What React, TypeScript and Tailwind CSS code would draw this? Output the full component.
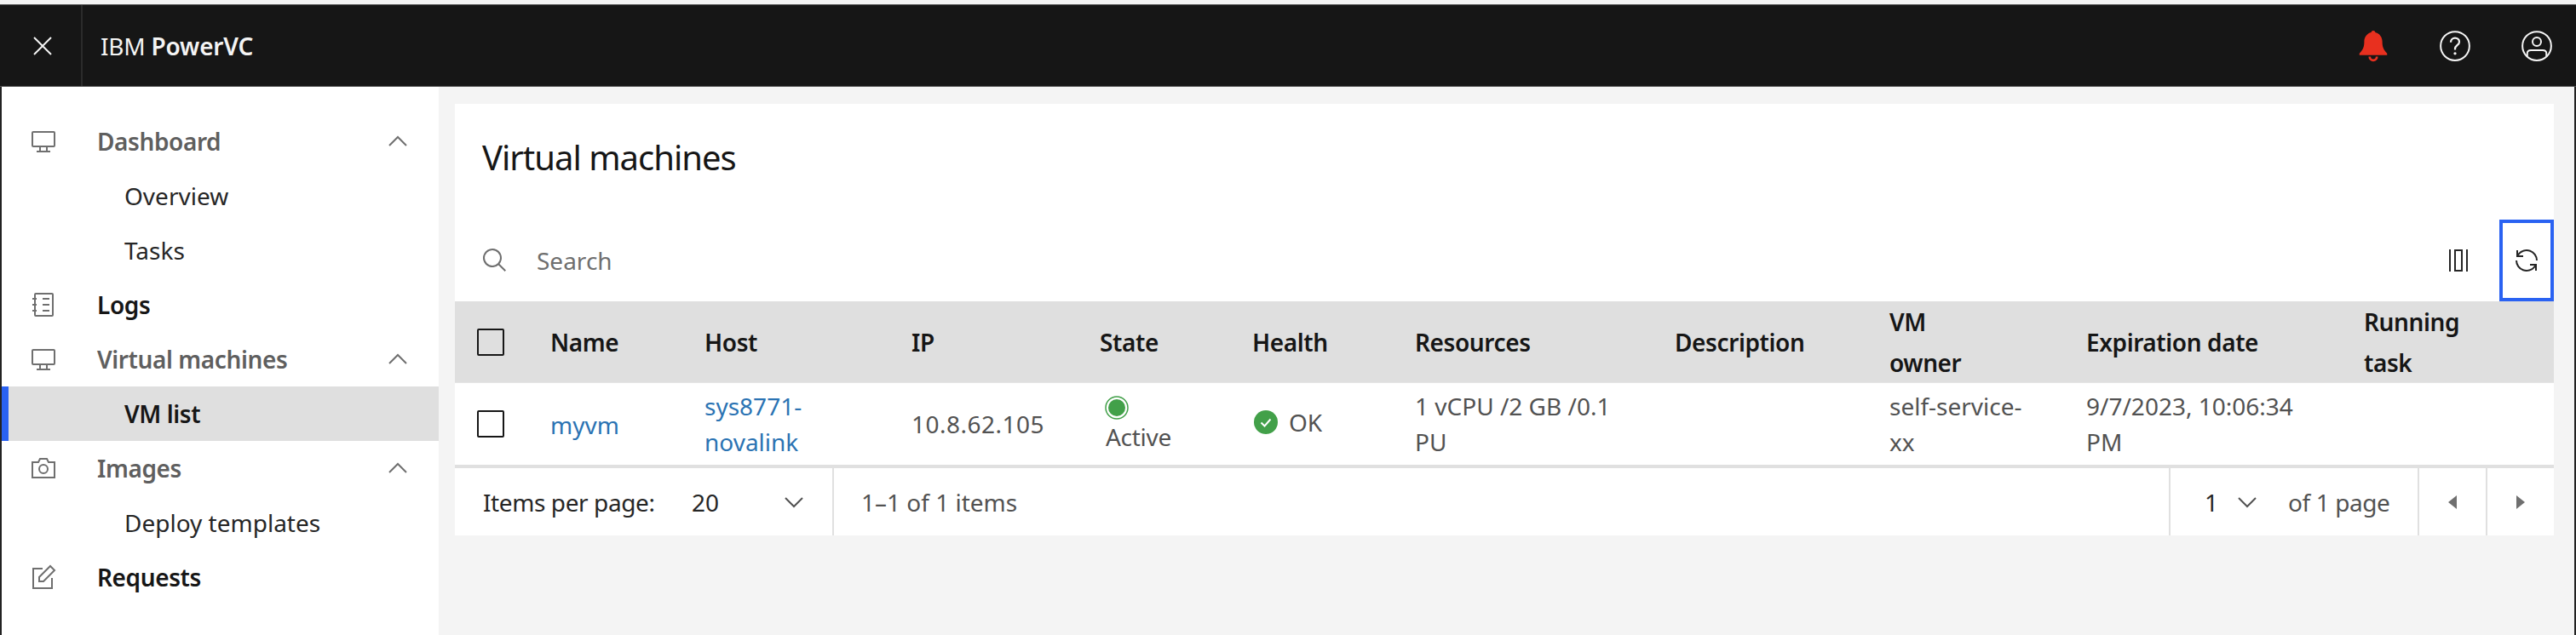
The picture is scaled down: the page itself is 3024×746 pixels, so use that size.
import React from "react";

const svgBase = { viewBox: "0 0 32 32", fill: "none", stroke: "currentColor", strokeWidth: 2 } as const;

function MonitorIcon() {
  return (
    <svg {...svgBase} className="h-8 w-8 text-[#6f6f6f]">
      <rect x="3" y="5" width="26" height="17" rx="1" />
      <path d="M12 22v5M20 22v5M8 28h16" />
    </svg>
  );
}

function LogIcon() {
  return (
    <svg {...svgBase} className="h-8 w-8 text-[#6f6f6f]">
      <rect x="6" y="3" width="21" height="26" rx="1" />
      <path d="M3 9h5M3 16h5M3 23h5M15 9h8M15 16h8M15 23h8" />
    </svg>
  );
}

function CameraIcon() {
  return (
    <svg {...svgBase} className="h-8 w-8 text-[#6f6f6f]">
      <path d="M3 9h7l2-4h8l2 4h7v18H3z" />
      <circle cx="16" cy="17" r="5" />
    </svg>
  );
}

function EditIcon() {
  return (
    <svg {...svgBase} className="h-8 w-8 text-[#6f6f6f]">
      <path d="M15 6H4v23h22V17" />
      <path d="M11 21v-5L24 3l5 5-13 13z" />
    </svg>
  );
}

function ChevronUp() {
  return (
    <svg {...svgBase} className="h-8 w-8 text-[#6f6f6f]">
      <path d="M6 21 16 11l10 10" />
    </svg>
  );
}

function ChevronDown({ className }: { className: string }) {
  return (
    <svg {...svgBase} className={className}>
      <path d="M6 11l10 10 10-10" />
    </svg>
  );
}

function SideItem({ icon, label, tone, chevron }: { icon: React.ReactNode; label: string; tone: string; chevron?: boolean }) {
  return (
    <div className="flex h-16 items-center pl-[33px]">
      <div className="w-[79px]">{icon}</div>
      <span className={`flex-1 font-semibold tracking-[-0.4px] ${tone}`}>{label}</span>
      {chevron && <div className="mr-[32px]"><ChevronUp /></div>}
    </div>
  );
}

function SubItem({ label, active }: { label: string; active?: boolean }) {
  if (active) {
    return <div className="flex h-16 items-center border-l-8 border-[#2a62f2] bg-[#dfdfdf] pl-[136px] font-semibold tracking-[-0.4px] text-[#161616]">{label}</div>;
  }
  return <div className="flex h-16 items-center pl-[144px] text-[#262626]">{label}</div>;
}

function Sidebar() {
  return (
    <aside className="w-[513px] shrink-0 bg-white pt-8">
      <SideItem icon={<MonitorIcon />} label="Dashboard" tone="text-[#5f5f5f]" chevron />
      <SubItem label="Overview" />
      <SubItem label="Tasks" />
      <SideItem icon={<LogIcon />} label="Logs" tone="text-[#161616]" />
      <SideItem icon={<MonitorIcon />} label="Virtual machines" tone="text-[#5f5f5f]" chevron />
      <SubItem label="VM list" active />
      <SideItem icon={<CameraIcon />} label="Images" tone="text-[#5f5f5f]" chevron />
      <SubItem label="Deploy templates" />
      <SideItem icon={<EditIcon />} label="Requests" tone="text-[#161616]" />
    </aside>
  );
}

function TopBar() {
  return (
    <header className="flex h-[97px] shrink-0 items-center border-y border-[#555] bg-[#161616] text-[#f4f4f4]">
      <div className="flex h-full w-[97px] items-center border-r-2 border-[#2b2b2b] pl-[34px]">
        <svg {...svgBase} className="h-8 w-8">
          <path d="M6 6l20 20M26 6 6 26" />
        </svg>
      </div>
      <div className="ml-[21px] flex-1 tracking-[-0.2px]">
        IBM <span className="font-semibold">PowerVC</span>
      </div>
      <svg viewBox="0 0 32 32" className="mr-[56px] h-10 w-10 text-[#e8301f]" fill="currentColor">
        <path d="M16 1.5c1 0 1.8.7 1.9 1.7C22 4.2 24.5 7.8 24.5 12c0 4.5.7 7 4.5 11v1.5H3V23c3.800-4 4.500-6.500 4.500-11 0-4.200 2.500-7.800 6.600-8.800.1-1 .9-1.700 1.900-1.700z" />
        <path d="M11.500 26a4.500 4.500 0 0 0 9 0h-2.200a2.300 2.300 0 0 1-4.600 0z" />
      </svg>
      <svg {...svgBase} className="mr-[56px] h-10 w-10">
        <circle cx="16" cy="16" r="13.500" strokeWidth="1.600" />
        <path d="M12 12.500c0-2.500 1.800-4 4-4s4 1.500 4 3.700c0 3-4 3.300-4 6.300v1" strokeWidth="1.800" />
        <circle cx="16" cy="23" r="1.300" fill="currentColor" stroke="none" />
      </svg>
      <svg {...svgBase} className="mr-[26px] h-10 w-10">
        <circle cx="16" cy="16" r="13.500" strokeWidth="1.600" />
        <circle cx="16" cy="12" r="4" strokeWidth="1.600" />
        <path d="M7 25.500V23c0-2 1.500-3 3.500-3h11c2 0 3.500 1 3.500 3v2.500" strokeWidth="1.600" />
      </svg>
    </header>
  );
}

const gridCols = "grid grid-cols-[112px_181px_243px_221px_179px_191px_305px_252px_231px_326px_1fr]";

function HeaderCell({ children }: { children?: React.ReactNode }) {
  return <div className="flex items-center font-semibold tracking-[-0.4px] text-[#161616]">{children && <span>{children}</span>}</div>;
}

function Checkbox() {
  return (
    <div className="flex items-center pl-[26px]">
      <div className="h-8 w-8 rounded-[2px] border-2 border-[#161616]" />
    </div>
  );
}

function VmTable() {
  return (
    <div>
      <div className={`${gridCols} h-[96px] border-b border-[#e4e4e4] bg-[#dfdfdf] leading-[48px]`}>
        <Checkbox />
        <HeaderCell>Name</HeaderCell>
        <HeaderCell>Host</HeaderCell>
        <HeaderCell>IP</HeaderCell>
        <HeaderCell>State</HeaderCell>
        <HeaderCell>Health</HeaderCell>
        <HeaderCell>Resources</HeaderCell>
        <HeaderCell>Description</HeaderCell>
        <HeaderCell>VM<br />owner</HeaderCell>
        <HeaderCell>Expiration date</HeaderCell>
        <HeaderCell>Running<br />task</HeaderCell>
      </div>
      <div className={`${gridCols} h-[100px] border-b-4 border-[#e0e0e0] bg-white leading-[42px] text-[#525252]`}>
        <Checkbox />
        <div className="flex items-center pt-[2px] text-[#2b73b3]">myvm</div>
        <div className="flex items-center text-[#2b73b3]"><span>sys8771-<br />novalink</span></div>
        <div className="flex items-center tracking-[0.5px]">10.8.62.105</div>
        <div className="flex flex-col pl-[7px] pt-[15px]">
          <svg viewBox="0 0 28 28" className="-ml-[1px] h-7 w-7 shrink-0">
            <circle cx="14" cy="14" r="13" fill="none" stroke="#42a049" strokeWidth="1.500" />
            <circle cx="14" cy="14" r="10" fill="#42a049" />
          </svg>
          <span className="-mt-[1px] leading-[42px] tracking-[-0.3px]">Active</span>
        </div>
        <div className="flex items-center gap-[13px] pb-[4px] pl-[2px]">
          <svg viewBox="0 0 28 28" className="h-7 w-7">
            <circle cx="14" cy="14" r="14" fill="#42a049" />
            <path d="M8.500 14.500l4 4 7-8" fill="none" stroke="#fff" strokeWidth="2" />
          </svg>
          <span>OK</span>
        </div>
        <div className="flex items-center"><span>1 vCPU /2 GB /0.1<br />PU</span></div>
        <div />
        <div className="flex items-center"><span>self-service-<br />xx</span></div>
        <div className="flex items-center"><span>9/7/2023, 10:06:34<br />PM</span></div>
        <div />
      </div>
    </div>
  );
}

function Pagination() {
  return (
    <div className="flex h-[79px] items-stretch bg-white text-[#393939]">
      <div className="flex w-[445px] items-center border-r-2 border-[#e0e0e0] pl-[33px]">
        <span className="w-[245px] tracking-[-0.4px] text-[#262626]">Items per page:</span>
        <span className="w-[104px] text-[#262626]">20</span>
        <ChevronDown className="h-8 w-8 text-[#525252]" />
      </div>
      <div className="flex flex-1 items-center pl-[32px] text-[#525252]">1–1 of 1 items</div>
      <div className="flex w-[292px] items-center border-l-2 border-[#e0e0e0] pl-[40px] text-[#525252]">
        <span className="w-[34px] text-[#262626]">1</span>
        <ChevronDown className="h-8 w-8 text-[#525252]" />
        <span className="ml-[32px] tracking-[-0.4px]">of 1 page</span>
      </div>
      <div className="flex w-[80px] items-center justify-center border-l-2 border-[#e0e0e0]">
        <div className="h-0 w-0 border-y-[8px] border-r-[10px] border-y-transparent border-r-[#6f6f6f]" />
      </div>
      <div className="flex w-[80px] items-center justify-center border-l-2 border-[#e0e0e0]">
        <div className="h-0 w-0 border-y-[8px] border-l-[10px] border-y-transparent border-l-[#6f6f6f]" />
      </div>
    </div>
  );
}

function Toolbar() {
  return (
    <div className="flex h-[96px] items-center">
      <svg viewBox="0 0 32 32" fill="currentColor" className="ml-[31px] h-8 w-8 text-[#6f6f6f]">
        <path d="M29 27.586l-7.552-7.552a11.018 11.018 0 1 0-1.414 1.414L27.586 29ZM4 13a9 9 0 1 1 9 9A9.010 9.010 0 0 1 4 13Z" />
      </svg>
      <span className="ml-[33px] flex-1 text-[#6f6f6f]">Search</span>
      <svg viewBox="0 0 32 32" className="mr-[32px] h-8 w-8 text-[#262626]" fill="none" stroke="currentColor" strokeWidth="2">
        <path d="M6 3v26M26 3v26" />
        <rect x="12" y="4" width="8" height="24" />
      </svg>
      <div className="flex h-[96px] w-[64px] items-center justify-center border-4 border-[#2a62f2]">
        <svg viewBox="0 0 32 32" fill="currentColor" className="h-8 w-8 text-[#262626]">
          <path d="M12 10H6.780A11 11 0 0 1 27 16h2A13 13 0 0 0 6 7.680V4H4v8h8zM20 22h5.220A11 11 0 0 1 5 16H3a13 13 0 0 0 23 8.320V28h2V20H20z" />
        </svg>
      </div>
    </div>
  );
}

export default function App() {
  return (
    <div className="flex h-[746px] w-[3024px] flex-col overflow-hidden bg-[#f4f4f4] pt-[5px] font-['Noto_Sans',sans-serif] text-[28px]">
      <TopBar />
      <div className="flex min-h-0 flex-1 border-x-2 border-x-[#222]">
        <Sidebar />
        <main className="flex-1 pl-[19px] pr-6 pt-5">
          <div className="bg-white">
            <h1 className="flex h-[136px] items-start pl-[32px] pt-[33px] text-[40px] leading-[60px] tracking-[-1px] text-[#161616]">Virtual machines</h1>
            <Toolbar />
            <VmTable />
            <Pagination />
          </div>
        </main>
      </div>
    </div>
  );
}
